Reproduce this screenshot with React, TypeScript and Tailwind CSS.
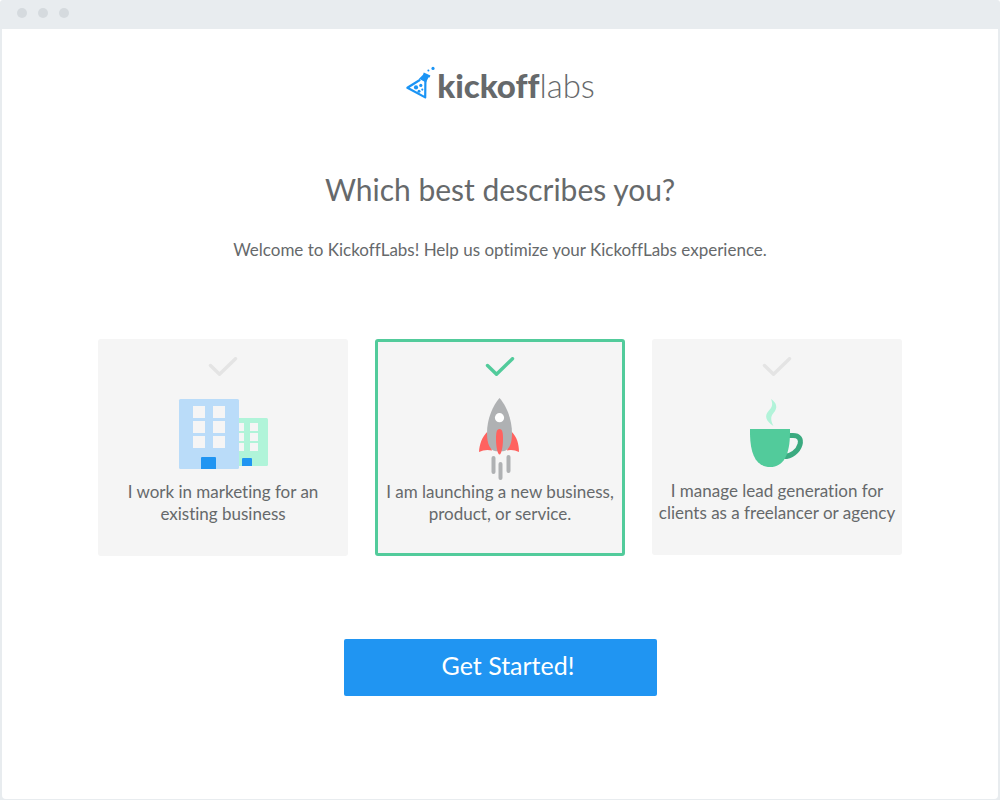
import { useState, type FormEvent, type ReactNode } from "react";

function FlaskMark() {
  return (
    <svg viewBox="0 0 30 34" className="h-[34px] w-[30px]" aria-hidden="true">
      <g fill="#1a94f5">
        <circle cx="28" cy="2.4" r="1.6" />
        <circle cx="23.4" cy="4.4" r="1" />
        <path d="M18.8 6.4 L25.4 9.4 L24.6 11.6 L23.4 11.4 L21 16.6 L14 12.8 L18 8.8 Z" />
        <circle cx="11" cy="21.4" r="2.1" />
        <circle cx="15.8" cy="19.4" r="1.6" />
        <circle cx="14" cy="25.3" r="1.5" />
        <circle cx="17.3" cy="23.6" r="1.1" />
      </g>
      <path
        d="M15.2 13.8 L2.4 21.8 L20.2 31.4 L20.4 15"
        fill="none"
        stroke="#1a94f5"
        strokeWidth="2.2"
        strokeLinejoin="round"
      />
    </svg>
  );
}

function Buildings() {
  return (
    <svg viewBox="-1 0 90 84" className="h-[84px] w-[90px]" aria-hidden="true">
      <rect x="50" y="21" width="39" height="48" rx="1.5" fill="#b0f4d9" />
      <path
        d="M57 26h8v8h-8zM71 26h8v8h-8zM57 36h8v8h-8zM71 36h8v8h-8zM57 46h8v8h-8zM71 46h8v8h-8z"
        fill="#f5f5f5"
      />
      <path d="M63 69v-7q0-1 1-1h8q1 0 1 1v7z" fill="#2095f2" />
      <rect x="0" y="2" width="60" height="70" rx="1.5" fill="#badcf9" />
      <path
        d="M14 9h12v12h-12zM34 9h12v12h-12zM14 24h12v12h-12zM34 24h12v12h-12zM14 39h12v12h-12zM34 39h12v12h-12z"
        fill="#f5f5f5"
      />
      <path d="M22 72v-11q0-1 1-1h13q1 0 1 1v11z" fill="#2095f2" />
    </svg>
  );
}

function Rocket() {
  return (
    <svg viewBox="0 0 42 84" className="h-[84px] w-[42px]" aria-hidden="true">
      <path d="M8.5 34.5 C3 40 .5 47 0 55 Q6 52 13 53.5 Z" fill="#ff625f" />
      <path d="M32.5 34.5 C38 40 40 47 40 55 Q34 52 28 53.5 Z" fill="#ff625f" />
      <path
        d="M20.5 1 C14 8 8 22 8 36 C8 47 11 53.5 17 54.3 H24 C30 53.5 33 47 33 36 C33 22 27 8 20.5 1 Z"
        fill="#afb1b3"
      />
      <circle cx="20.5" cy="20.7" r="4.6" fill="#fff" />
      <path
        d="M20.5 32 C17.5 32 17 36 17 42 C17 50 18.7 57.5 20.5 57.5 C22.3 57.5 24 50 24 42 C24 36 23.5 32 20.5 32Z"
        fill="#ff625f"
      />
      <path
        d="M14.5 61v14M21.5 67v14M29.5 60v14"
        stroke="#afb1b3"
        strokeWidth="4"
        strokeLinecap="round"
      />
    </svg>
  );
}

function Cup() {
  return (
    <svg viewBox="0 0 54 83" className="h-[83px] w-[54px]" aria-hidden="true">
      <path
        d="M21 2 C27 6 28 11 23.5 16 C20 20 21 24 23.5 29 C16 24 14 19 18.5 14 C22.5 10 23 7 21 2Z"
        fill="#b2f3d9"
      />
      <path
        d="M39 38.5 H43 C49 38.5 51.5 42 50 47.5 C48 54.5 41 59.5 34 59.5"
        fill="none"
        stroke="#3baa80"
        strokeWidth="5"
      />
      <path d="M0 32 H40 C40.5 57 34 70 20 70 C6 70 -.5 57 0 32Z" fill="#52cb9b" />
    </svg>
  );
}

type Option = { id: string; lines: [string, string]; icon: ReactNode };

const options: Option[] = [
  { id: "marketing", lines: ["I work in marketing for an", "existing business"], icon: <Buildings /> },
  { id: "launching", lines: ["I am launching a new business,", "product, or service."], icon: <Rocket /> },
  { id: "agency", lines: ["I manage lead generation for", "clients as a freelancer or agency"], icon: <Cup /> },
];

function OptionCard({ option, checked, onSelect }: { option: Option; checked: boolean; onSelect: () => void }) {
  return (
    <label
      className={`relative flex w-[250px] cursor-pointer flex-col items-center rounded-[3px] border-3 bg-[#f5f5f5] pt-[15px] pb-7 ${
        checked ? "border-[#52cb9b]" : "border-[#f5f5f5]"
      }`}
    >
      <input type="radio" name="role" value={option.id} checked={checked} onChange={onSelect} className="sr-only" />
      <svg
        viewBox="0 0 30 20"
        className={`mb-5 h-5 w-[30px] ${checked ? "text-[#52cb9b]" : "text-[#e4e4e4]"}`}
        aria-hidden="true"
      >
        <path
          d="M2.5 8.5 L11.5 17.3 L27.5 1.7"
          fill="none"
          stroke="currentColor"
          strokeWidth="3.4"
          strokeLinecap="round"
          strokeLinejoin="round"
        />
      </svg>
      {option.icon}
      <span className="text-center text-[17px] leading-[22px] whitespace-nowrap">
        {option.lines[0]}
        <br />
        {option.lines[1]}
      </span>
    </label>
  );
}

export default function App() {
  const [selected, setSelected] = useState("launching");
  const submit = (event: FormEvent) => event.preventDefault();

  return (
    <div className="flex min-h-screen flex-col overflow-hidden rounded-t-[3px] bg-[#e8ecef] font-[Lato,sans-serif] text-[#66696b] [font-variant-ligatures:none]">
      <div className="flex h-[29px] items-center gap-[11px] px-[17px] pb-[3px]">
        <span className="size-[10px] rounded-full bg-[#d5dade]" />
        <span className="size-[10px] rounded-full bg-[#d5dade]" />
        <span className="size-[10px] rounded-full bg-[#d5dade]" />
      </div>
      <main className="mx-[2px] mb-px flex grow flex-col items-center rounded-b-[4px] bg-white px-4 pt-[37px] pb-16">
        <a href="#" className="flex items-start gap-[2px]" aria-label="KickoffLabs">
          <FlaskMark />
          <span className="text-[33px] leading-[38px] whitespace-nowrap">
            <span className="font-black">kickoff</span>
            <span className="font-light">labs</span>
          </span>
        </a>
        <h1 className="mt-[67px] text-center text-[30px] leading-9">Which best describes you?</h1>
        <p className="mt-[31px] text-center text-[17px] leading-6">
          Welcome to KickoffLabs! Help us optimize your KickoffLabs experience.
        </p>
        <form onSubmit={submit} className="mt-[77px] flex flex-col items-center">
          <fieldset
            aria-label="Which best describes you?"
            className="flex flex-wrap items-start justify-center gap-[27px]"
          >
            {options.map((option) => (
              <OptionCard
                key={option.id}
                option={option}
                checked={selected === option.id}
                onSelect={() => setSelected(option.id)}
              />
            ))}
          </fieldset>
          <button
            type="submit"
            className="mt-[83px] h-[57px] w-[313px] cursor-pointer rounded-[2px] bg-[#2095f2] pb-1 pl-4 text-[25px] text-white"
          >
            Get Started!
          </button>
        </form>
      </main>
    </div>
  );
}
